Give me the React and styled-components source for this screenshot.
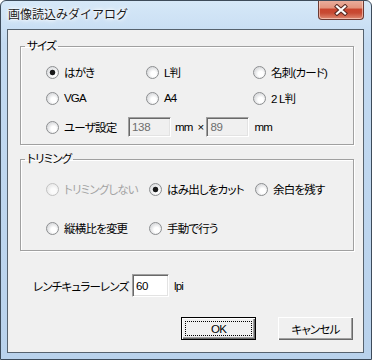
import React from 'react';
import styled, { createGlobalStyle } from 'styled-components';

const GlobalStyle = createGlobalStyle`
  body {
    margin: 0;
    background: #ffffff;
    font-family: "Liberation Sans", "Noto Sans CJK JP", sans-serif;
    font-size: 11.5px;
    letter-spacing: -0.8px;
    font-feature-settings: "palt" 1;
  }
`;

const Window = styled.div`
  width: 372px;
  height: 360px;
  box-sizing: border-box;
  border: 1px solid #3d4b5a;
  border-radius: 6px 6px 0 0;
  background: linear-gradient(180deg, #d6e8f8 0%, #c3daf1 12%, #b9d2ec 100%);
  display: flex;
  flex-direction: column;
  overflow: hidden;
`;

const TitleBar = styled.div`
  height: 28px;
  display: flex;
  align-items: flex-start;
  padding-left: 7px;
  flex-shrink: 0;
`;

const Title = styled.div`
  margin-top: 5px;
  font-family: "Noto Sans CJK JP", sans-serif;
  font-feature-settings: normal;
  letter-spacing: 0;
  font-size: 12px;
  line-height: 15px;
  color: #1b1b1b;
  text-shadow: 0 0 6px #ffffff, 0 0 4px #ffffff, 0 0 2px #ffffff;
`;

const CloseButton = styled.div`
  margin-left: auto;
  margin-right: 7px;
  margin-top: -1px;
  width: 46px;
  height: 20px;
  box-sizing: border-box;
  border: 1px solid #6b3a33;
  border-top: none;
  border-radius: 0 0 4px 4px;
  background: linear-gradient(180deg, #eab0a0 0%, #e3957e 40%, #c9452e 50%, #c74a33 68%, #df8a72 100%);
  box-shadow: inset 0 0 0 1px rgba(255, 220, 210, 0.6);
  display: flex;
  align-items: center;
  justify-content: center;
`;

const Client = styled.div`
  flex: 1;
  margin: 0 7px 6px 6px;
  border: 1px solid #56626e;
  background: #f0f0f0;
  padding: 9px 9px 0 12px;
  display: flex;
  flex-direction: column;
`;

const Group = styled.fieldset`
  margin: ${p => p.$top || 0}px 0 0 0;
  padding: 0;
  min-width: 0;
  border: 1px solid #a0a0a0;
  box-shadow: inset 1px 1px 0 #ffffff, 1px 1px 0 #ffffff;
`;

const Legend = styled.legend`
  margin-left: 4px;
  padding: 0 2px;
  line-height: 14px;
  color: #000;
`;

const OptionGrid = styled.div`
  display: grid;
  grid-template-columns: ${p => p.$cols};
  grid-template-rows: ${p => p.$rows};
  row-gap: ${p => p.$gap || 0}px;
  align-items: center;
  padding: ${p => p.$pad};
`;

const Option = styled.label`
  display: flex;
  align-items: center;
  gap: 5px;
  white-space: nowrap;
  color: ${p => (p.$disabled ? '#a3a3a3' : '#000')};
`;

const Radio = styled.span`
  width: 13px;
  height: 13px;
  box-sizing: border-box;
  border-radius: 50%;
  flex-shrink: 0;
  border: 1px solid ${p => (p.$disabled ? '#c2c2c2' : '#8c8e90')};
  background: ${p =>
    p.$checked
      ? 'radial-gradient(circle at 50% 50%, #1a1a1a 0 2.2px, #4a4f55 2.6px, transparent 3.2px), radial-gradient(circle at 60% 62%, #ffffff 0 2.5px, #e2e3e5 6px)'
      : p.$disabled
      ? 'radial-gradient(circle at 60% 62%, #fbfbfb 0 2.5px, #ececec 6px)'
      : 'radial-gradient(circle at 60% 62%, #ffffff 0 2.5px, #dfe0e2 6px)'};
`;

const OptionText = styled.span`
  display: inline-block;
  width: ${p => (p.$w ? `${p.$w}px` : 'auto')};
`;

const UserRow = styled.div`
  grid-column: 1 / -1;
  display: flex;
  align-items: center;
`;

const Field = styled.input`
  box-sizing: border-box;
  width: ${p => p.$w}px;
  height: ${p => p.$h}px;
  margin: 0 0 0 ${p => p.$ml || 0}px;
  padding: 0 0 0 3px;
  font-family: "Liberation Sans", "Noto Sans CJK JP", sans-serif;
  font-size: 11.5px;
  letter-spacing: -0.3px;
  border: 1px solid;
  border-color: #a0a0a0 #ffffff #ffffff #a0a0a0;
  box-shadow: inset 1px 1px 0 #696969, inset -1px -1px 0 #e3e3e3;
  outline: none;
  background: ${p => (p.disabled ? '#f0f0f0' : '#ffffff')};
  color: ${p => (p.disabled ? '#6d6d6d' : '#000000')};
  -webkit-text-fill-color: ${p => (p.disabled ? '#6d6d6d' : '#000000')};
  opacity: 1;
`;

const Unit = styled.span`
  margin-left: ${p => p.$ml || 0}px;
  white-space: nowrap;
`;

const LensRow = styled.div`
  margin: 23px 0 0 13px;
  height: 23px;
  display: flex;
  align-items: center;
`;

const LensLabel = styled.span`
  width: 99px;
  white-space: nowrap;
`;

const ButtonRow = styled.div`
  margin: 20px 1px 0 0;
  display: flex;
  justify-content: flex-end;
  gap: 22px;
`;

const Button = styled.button`
  width: 75px;
  height: 23px;
  box-sizing: border-box;
  padding: 0;
  font-family: "Liberation Sans", "Noto Sans CJK JP", sans-serif;
  font-feature-settings: "palt" 1;
  font-size: 11.5px;
  letter-spacing: -0.8px;
  color: #000;
  background: #f0f0f0;
  border: ${p => (p.$default ? '1px solid #000' : 'none')};
  box-shadow: inset 1px 1px 0 #ffffff, inset -1px -1px 0 #696969, inset -2px -2px 0 #a0a0a0;
  outline: ${p => (p.$default ? '1px dotted #000' : 'none')};
  outline-offset: -5px;
`;

const CloseIcon = () => (
  <svg width="16" height="12" viewBox="0 0 16 12">
    <path d="M4 2.5 L12 9.5 M12 2.5 L4 9.5" stroke="#5a2a22" strokeWidth="4.2" strokeLinecap="square" />
    <path d="M4 2.5 L12 9.5 M12 2.5 L4 9.5" stroke="#ffffff" strokeWidth="2.2" strokeLinecap="square" />
  </svg>
);

const RadioOption = ({ children, checked, disabled, w }) => (
  <Option $disabled={disabled}>
    <Radio $checked={checked} $disabled={disabled} />
    <OptionText $w={w}>{children}</OptionText>
  </Option>
);

export default function App() {
  return (
    <>
      <GlobalStyle />
      <Window>
        <TitleBar>
          <Title>画像読込みダイアログ</Title>
          <CloseButton>
            <CloseIcon />
          </CloseButton>
        </TitleBar>
        <Client>
          <Group>
            <Legend>サイズ</Legend>
            <OptionGrid $cols="100px 107px 1fr" $rows="26px 26px 32px" $pad="6px 0 1px 25px">
              <RadioOption checked>はがき</RadioOption>
              <RadioOption>L判</RadioOption>
              <RadioOption>名刺(カード)</RadioOption>
              <RadioOption>VGA</RadioOption>
              <RadioOption>A4</RadioOption>
              <RadioOption>2 L判</RadioOption>
              <UserRow>
                <RadioOption w={64}>ユーザ設定</RadioOption>
                <Field $w={43} $h={20} disabled defaultValue="138" />
                <Unit $ml={4}>mm</Unit>
                <Unit $ml={5}>×</Unit>
                <Field $w={43} $h={20} $ml={3} disabled defaultValue="89" />
                <Unit $ml={5}>mm</Unit>
              </UserRow>
            </OptionGrid>
          </Group>
          <Group $top={7}>
            <Legend>トリミング</Legend>
            <OptionGrid $cols="103px 106px 1fr" $rows="26px 26px" $gap={13} $pad="10px 0 9px 25px">
              <RadioOption disabled>トリミングしない</RadioOption>
              <RadioOption checked>はみ出しをカット</RadioOption>
              <RadioOption>余白を残す</RadioOption>
              <RadioOption>縦横比を変更</RadioOption>
              <RadioOption>手動で行う</RadioOption>
            </OptionGrid>
          </Group>
          <LensRow>
            <LensLabel>レンチキュラーレンズ</LensLabel>
            <Field $w={37} $h={23} defaultValue="60" />
            <Unit $ml={5}>lpi</Unit>
          </LensRow>
          <ButtonRow>
            <Button $default>OK</Button>
            <Button>キャンセル</Button>
          </ButtonRow>
        </Client>
      </Window>
    </>
  );
}
